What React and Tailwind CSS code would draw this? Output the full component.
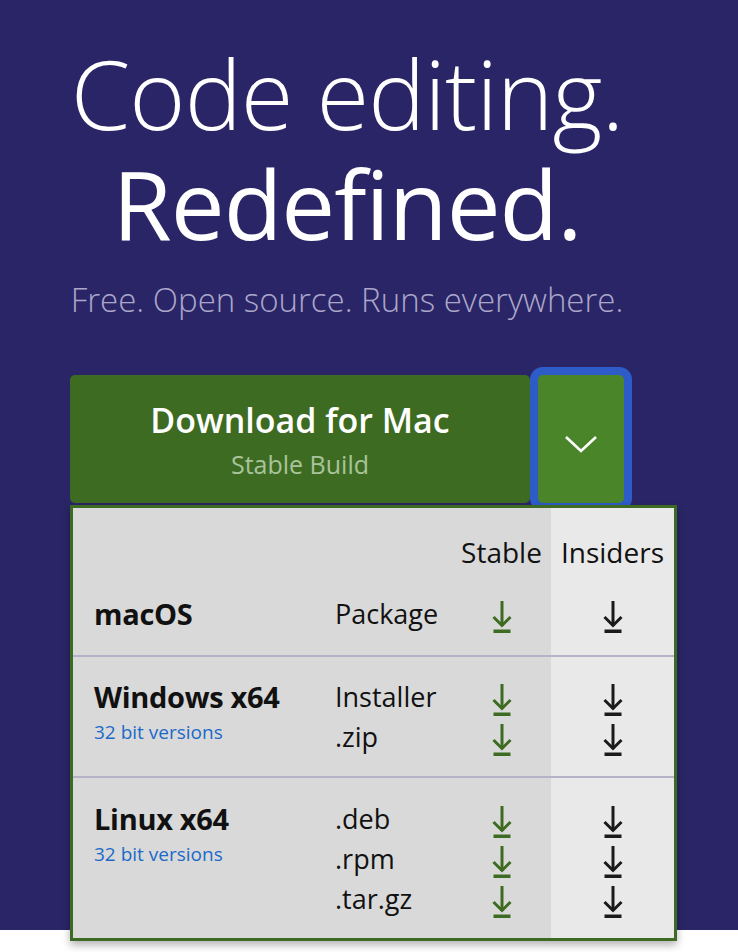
import React from 'react';

const font = { fontFamily: '"Open Sans", "Noto Sans", sans-serif' };

function DlArrow({ color }) {
    return (
        <svg width="20" height="32" viewBox="0 0 20 32" fill="none">
            <path d="M10 0 V25" stroke={color} strokeWidth="3" />
            <path d="M1.5 16 L10 24.5 L18.5 16" stroke={color} strokeWidth="3" />
            <rect x="1.5" y="28.5" width="17" height="3.5" fill={color} />
        </svg>
    );
}

const rows = [
    { os: 'macOS', items: ['Package'], pad: 'pt-[20px] pb-[21px]' },
    { os: 'Windows x64', sub: '32 bit versions', items: ['Installer', '.zip'], pad: 'pt-[20px] pb-[19px]' },
    { os: 'Linux x64', sub: '32 bit versions', items: ['.deb', '.rpm', '.tar.gz'], pad: 'pt-[21px] pb-[19px]' },
];

export default function App() {
    return (
        <div className="min-h-[952px] bg-white" style={font}>
            <div className="h-[930px] bg-[#2a2566] pl-[70px]">
                <div className="w-[554px] pt-[38px]">
                    <h1 className="text-center text-white">
                        <span className="block text-[96px] font-light leading-[110px] tracking-[-1px]">Code editing.</span>
                        <span className="block text-[96px] font-normal leading-[110px] tracking-[-1px]">Redefined.</span>
                    </h1>
                    <p className="mt-[22px] text-center text-[33px] font-light text-[#aaa7cb] leading-[40px] whitespace-nowrap">
                        Free. Open source. Runs everywhere.
                    </p>

                    <div className="relative mt-[55px] flex gap-2">
                        <button className="flex h-[128px] flex-1 flex-col items-center justify-center rounded-[5px] bg-[#3e6b22] text-center">
                            <span className="text-[34px] font-semibold leading-[40px] text-white">Download for Mac</span>
                            <span className="mt-[9px] text-[25px] leading-[30px] text-[#a9c49a]">Stable Build</span>
                        </button>
                        <button className="flex h-[128px] w-[86px] items-center justify-center rounded-[5px] bg-[#4a8629] ring-[8px] ring-[#2d5bc8]">
                            <svg width="34" height="20" viewBox="0 0 34 20" fill="none" className="mt-[10px]">
                                <path d="M2 3 L17 17 L32 3" stroke="white" strokeWidth="2.6" />
                            </svg>
                        </button>

                        <div className="absolute left-0 top-[130px] w-[607px] border-[3px] border-[#3e6b24] bg-[#d9d9d9] text-[#111] shadow-[0_4px_8px_rgba(0,0,0,0.3)]">
                            <div className="grid h-[66px] grid-cols-[262px_125px_91px_1fr] text-[28px] leading-[34px]">
                                <div />
                                <div />
                                <div className="flex items-end justify-center pb-[5px] pr-[8px]">Stable</div>
                                <div className="flex items-end justify-center bg-[#e9e9e9] pb-[5px]">Insiders</div>
                            </div>
                            {rows.map((row, i) => (
                                <div
                                    key={row.os}
                                    className={`grid grid-cols-[262px_125px_91px_1fr] ${i > 0 ? 'border-t-2 border-[#b6b3c9]' : ''}`}
                                >
                                    <div className={`pl-[21px] ${row.pad}`}>
                                        <div className="flex h-[40px] items-center text-[29px] font-bold tracking-[-0.3px]">{row.os}</div>
                                        {row.sub && (
                                            <div className="mt-[5px] text-[19px] leading-[20px] text-[#1b6ac9]">{row.sub}</div>
                                        )}
                                    </div>
                                    <div className={row.pad}>
                                        {row.items.map(it => (
                                            <div key={it} className="flex h-[40px] items-center text-[27px]">{it}</div>
                                        ))}
                                    </div>
                                    <div className={`pr-[8px] ${row.pad}`}>
                                        {row.items.map(it => (
                                            <div key={it} className="flex h-[40px] items-center justify-center pt-[6px]">
                                                <DlArrow color="#3e6b22" />
                                            </div>
                                        ))}
                                    </div>
                                    <div className={`bg-[#e9e9e9] ${row.pad}`}>
                                        {row.items.map(it => (
                                            <div key={it} className="flex h-[40px] items-center justify-center pt-[6px]">
                                                <DlArrow color="#1a1a1a" />
                                            </div>
                                        ))}
                                    </div>
                                </div>
                            ))}
                        </div>
                    </div>
                </div>
            </div>
        </div>
    );
}
